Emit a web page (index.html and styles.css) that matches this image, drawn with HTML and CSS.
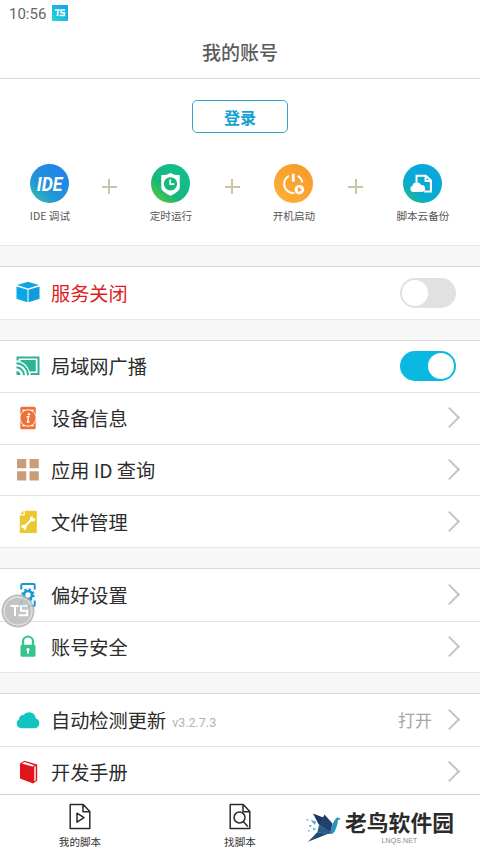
FILE: index.html
```html
<!DOCTYPE html>
<html lang="zh-CN">
<head>
<meta charset="utf-8">
<title>我的账号</title>
<link rel="stylesheet" href="styles.css">
</head>
<body>
<div class="screen">
  <div class="status">
    <span class="time">10:56</span>
    <svg class="app-badge" viewBox="0 0 16 16"><defs><linearGradient id="ts" x1="0" y1="1" x2="1" y2="0"><stop offset="0" stop-color="#2bdcc9"/><stop offset=".5" stop-color="#16b9e6"/><stop offset="1" stop-color="#1ba2ea"/></linearGradient></defs><rect width="16" height="16" fill="url(#ts)"/><path d="M3 5h5M6 5l-.5 6M13.200 5H9.300L9 7.800h3.500L12.200 10.500H7.500" fill="none" stroke="#fff" stroke-width="1.600"/></svg>
  </div>
  <header class="title">我的账号</header>

  <section class="hero">
    <button class="login">登录</button>
    <div class="features">
      <div class="feature">
        <svg viewBox="0 0 38 38"><defs><linearGradient id="g1" x1="0" y1="1" x2=".7" y2=".2"><stop offset="0" stop-color="#35c9a0"/><stop offset=".5" stop-color="#2294d8"/><stop offset="1" stop-color="#2186e6"/></linearGradient></defs><circle cx="19" cy="19" r="19" fill="url(#g1)"/><text class="ide" x="19" y="26.300" text-anchor="middle" textLength="25" lengthAdjust="spacingAndGlyphs">IDE</text></svg>
        <span>IDE 调试</span>
      </div>
      <i class="plus"></i>
      <div class="feature">
        <svg viewBox="0 0 38 38"><defs><linearGradient id="g2" x1="0" y1="1" x2=".7" y2=".2"><stop offset="0" stop-color="#6ccb2c"/><stop offset=".5" stop-color="#16b77c"/><stop offset="1" stop-color="#12bd8c"/></linearGradient></defs><circle cx="19" cy="19" r="19" fill="url(#g2)"/><path d="M19 8.700q4 2.400 9 2.100v12.500q0 3.200-9 7.700-9-4.500-9-7.700V10.800q5 .3 9-2.100z" fill="#fff"/><circle cx="19" cy="19.300" r="6.500" fill="#14b97c"/><path d="M18.700 15v4.700h4" fill="none" stroke="#fff" stroke-width="1.700"/></svg>
        <span>定时运行</span>
      </div>
      <i class="plus"></i>
      <div class="feature">
        <svg viewBox="0 0 38 38"><defs><linearGradient id="g3" x1="0" y1="1" x2=".8" y2="0"><stop offset="0" stop-color="#ffb13b"/><stop offset="1" stop-color="#f79a28"/></linearGradient></defs><circle cx="19" cy="19" r="19" fill="url(#g3)"/><path d="M14.500 11.500a9 9 0 0 0 5.500 16.800M23.200 11.500a9 9 0 0 1 4.300 6.500" fill="none" stroke="#fff" stroke-width="1.900"/><path d="M18.800 9.500v7.800" stroke="#fff" stroke-width="2.800"/><circle cx="24.700" cy="25" r="4.600" fill="#fff"/><path d="M23.200 22.500v5l4-2.500z" fill="#f9a02c"/></svg>
        <span>开机启动</span>
      </div>
      <i class="plus"></i>
      <div class="feature">
        <svg viewBox="0 0 38 38"><defs><linearGradient id="g4" x1="0" y1="1" x2=".7" y2=".2"><stop offset="0" stop-color="#2cbf69"/><stop offset=".45" stop-color="#08abd0"/><stop offset="1" stop-color="#08a8dc"/></linearGradient></defs><circle cx="19" cy="19" r="19" fill="url(#g4)"/><path d="M13.200 17.500v-6h9l5 4.500v10.700h-6.500M22 12v4.500h5" fill="none" stroke="#fff" stroke-width="2"/><path d="M9.500 27.300a3.200 3.200 0 0 1-.3-6.100 4.500 4.500 0 0 1 8.500-.8 3.300 3.300 0 0 1 .8 6.900z" fill="#fff"/></svg>
        <span>脚本云备份</span>
      </div>
    </div>
  </section>

  <section class="group">
    <div class="row">
      <svg class="icon" viewBox="0 0 24 24"><path d="M12 .8 23 4 12 7.500 1 4z" fill="#14a4e4"/><path d="M.5 5.500 11.500 8.700v12.500L.5 17.700z" fill="#0ba6e8"/><path d="M23.500 5.500 12.500 8.700v12.500l11-3.500z" fill="#119bdc"/></svg>
      <span class="label red">服务关闭</span><span class="switch"></span>
    </div>
  </section>

  <section class="group">
    <div class="row">
      <svg class="icon" viewBox="0 0 24 24"><path d="M1.500 6.500V3.400h21v16.700h-8" fill="none" stroke="#2bb596" stroke-width="2"/><path d="M4.500 7.500V6h15.300v11.500h-6.300Q11.500 10 4.500 7.500z" fill="#2bb596"/><path d="M.5 9.200a12 12 0 0 1 11.500 12M.5 13.300a8 8 0 0 1 7.500 7.900" fill="none" stroke="#2bb596" stroke-width="1.900"/><path d="M.5 17a4 4 0 0 1 4 4.100h-4z" fill="#2bb596"/></svg>
      <span class="label">局域网广播</span><span class="switch on"></span>
    </div>
    <div class="row">
      <svg class="icon" viewBox="0 0 24 24"><rect x="4.300" y=".8" width="15.400" height="22.400" rx="1.500" fill="#ee7138"/><path d="M6.300 4.300h11.400M6.300 19.700h11.400" stroke="#fff" stroke-width="1.200"/><circle cx="12" cy="12" r="8.400" fill="#fff"/><circle cx="12" cy="12" r="7.700" fill="#ee7138"/><path d="M10.500 10.800h2.200l-1.200 5.200h2" fill="none" stroke="#fff" stroke-width="1.400"/><circle cx="12.900" cy="8.300" r="1.200" fill="#fff"/></svg>
      <span class="label">设备信息</span><i class="chev"></i>
    </div>
    <div class="row">
      <svg class="icon" viewBox="0 0 24 24"><path d="M1 1h9.300v9.200H1zM13.500 1h9.300v9.200h-9.300zM1 13.300h9.300v9.200H1zM13.500 13.300h9.300v9.200h-9.300z" fill="#c79e78"/></svg>
      <span class="label">应用 ID 查询</span><i class="chev"></i>
    </div>
    <div class="row">
      <svg class="icon" viewBox="0 0 24 24"><path d="M8.800.8h12V23h-17V5.600h5z" fill="#eac92f"/><path d="M7.500.8v3.400H4z" fill="#eac92f"/><path d="m8.500 16.800 7.200-7.500" stroke="#fff" stroke-width="2"/><path d="M16.800 6.200v2.300h2.400a2.600 2.600 0 1 1-2.400-2.300zM7.700 20v-2.300H5.300a2.600 2.600 0 1 1 2.400 2.300z" fill="#fff"/></svg>
      <span class="label">文件管理</span><i class="chev"></i>
    </div>
  </section>

  <section class="group">
    <div class="row">
      <svg class="icon" viewBox="0 0 24 24"><path d="M5.300 6.500V2q0-1 1-1h11.400q1 0 1 1v4.500M5.300 17.500v4.500q0 1 1 1h11.400q1 0 1-1v-4.500" fill="none" stroke="#1597d8" stroke-width="2"/><circle cx="12" cy="12" r="4" fill="none" stroke="#1597d8" stroke-width="2.600"/><circle cx="12" cy="12" r="5.700" fill="none" stroke="#1597d8" stroke-width="2" stroke-dasharray="2.238 2.238"/></svg>
      <span class="label">偏好设置</span><i class="chev"></i>
      <svg class="floating" viewBox="0 0 34 34"><circle cx="17" cy="17" r="16.500" fill="#b5b5b5"/><circle cx="17" cy="17" r="14" fill="#bdbdbd" stroke="#dedede" stroke-width="1.300"/><path d="M9.500 12h8.500M14 12v10M27 12h-7v4.700h6.200v4.500h-8.700" fill="none" stroke="#fff" stroke-width="2"/></svg>
    </div>
    <div class="row">
      <svg class="icon" viewBox="0 0 24 24"><path d="M7 11V6.500a5 5 0 0 1 10 0V11" fill="none" stroke="#34c58c" stroke-width="2.200"/><rect x="4.500" y="9.800" width="15" height="12" rx="1.200" fill="#34c58c"/><path d="M12 13a1.700 1.700 0 0 1 1 3v2.500h-2V16a1.700 1.700 0 0 1 1-3z" fill="#fff"/></svg>
      <span class="label">账号安全</span><i class="chev"></i>
    </div>
  </section>

  <section class="group last">
    <div class="row">
      <svg class="icon" viewBox="0 0 24 24"><path d="M5 20.200a4.700 4.700 0 0 1-2-8.700 4.200 4.200 0 0 1 4.500-4.400 6.800 6.800 0 0 1 12.300 3.400 5 5 0 0 1-.8 9.700z" fill="#11c4bf"/></svg>
      <span class="label">自动检测更新</span><span class="version">v3.2.7.3</span><span class="value">打开</span><i class="chev"></i>
    </div>
    <div class="row">
      <svg class="icon" viewBox="0 0 24 24"><path d="M4 3.500 8.500.8l12.700 3.800v16l-4 3L4 18.500z" fill="#e1141b"/><path d="m5.800 3.400 2.800-1.300 10.200 3.300-2.400 1.200z" fill="#fff"/><path d="M19.700 6v14.500l-1.400.8V6.800z" fill="#fff"/></svg>
      <span class="label">开发手册</span><i class="chev"></i>
    </div>
  </section>

  <nav class="tabs">
    <div class="tab">
      <svg viewBox="0 0 22 26"><path d="M1.200 1h13L20.800 8v17H1.200zM14 1v7.200h6.800M8 9.700v9l7-4.500z"/></svg>
      <span>我的脚本</span>
    </div>
    <div class="tab">
      <svg viewBox="0 0 22 26"><path d="M1.200 1h13L20.800 8v17H1.200zM14 1v7.200h6.800"/><circle cx="10.500" cy="14" r="5.500"/><path d="m14.300 18 4.500 5"/></svg>
      <span>找脚本</span>
    </div>
    <div class="brand">
      <svg viewBox="0 0 36 30"><path d="M8 .5 19.500 5 14 12z" fill="#1d3a63"/><path d="M19.500 1.500 27.500 10.500 25.500 19.500 14 12z" fill="#20406d"/><path d="M14 12 28 20.500 21 21.300 12.500 19z" fill="#2c5b8b"/><path d="M25.500 19.500q1-8 5-13.500 2.800-3 5 .5l-2.500.5Q32 16 28 20.500z" fill="#2594bd"/><path d="M12.500 19 22 21.200 3 28.800q5-5 9.500-9.800z" fill="#1b4c78"/><path d="m5.500 7 5.500 1.500-1 3.500zM1 6l2.500.7-.8 1.600zM4 12l3 .5-2 2zM8 14.500l3 1.500-2.500 1.500zM3 17l2 .5-1.500 1.500z" fill="#45adc8"/></svg>
      <div class="brand-text"><b>老鸟软件园</b><small>LNQS.NET</small></div>
    </div>
  </nav>
</div>
</body>
</html>
```

FILE: styles.css
```css
* { box-sizing: border-box; }
body { margin: 0; background: #fff; font-family: Roboto, "Noto Sans CJK SC", sans-serif; color: #333; }
svg { display: block; flex: none; }
.screen { width: 480px; height: 853px; display: flex; flex-direction: column; overflow: hidden; background: #f7f7f7; }
.status { height: 27px; flex: none; background: #fff; display: flex; align-items: center; padding-left: 9px; gap: 6px; }
.time { font-size: 15px; line-height: 20px; color: #666; width: 37px; }
.app-badge { width: 16px; height: 16px; margin-top: -1px; }
.title { height: 52px; flex: none; background: #fff; border-bottom: 1px solid #d9d9d9; text-align: center; font: 500 19px/49px "Noto Sans CJK SC", sans-serif; color: #5b5b5b; }
.hero { height: 167px; flex: none; background: #fff; border-bottom: 1px solid #e6e6e6; padding-top: 21px; }
.login { display: block; width: 96px; height: 33px; margin: 0 auto; padding: 0; border: 1px solid #36a3cb; border-radius: 5px; background: #fff; color: #159fd3; font: bold 16px/30px "Noto Sans CJK SC", sans-serif; }
.features { display: grid; grid-template-columns: 60px 59px 64px 59px 64px 60px 74px; padding: 31px 0 0 19.900px; }
.feature { display: flex; flex-direction: column; align-items: center; gap: 5px; font: 10.600px/16px "Noto Sans CJK SC", sans-serif; color: #555; white-space: nowrap; }
.feature svg { width: 39px; height: 39px; }
.ide { font: italic bold 19.500px Roboto, sans-serif; fill: #fff; }
.plus { width: 15px; height: 15px; margin: 15px auto 0; background: linear-gradient(#c9c5a5, #c9c5a5) center / 15px 2px no-repeat, linear-gradient(#c9c5a5, #c9c5a5) center / 2px 15px no-repeat; }
.group { flex: none; margin-top: 20px; border-top: 1px solid #d9d9d9; border-bottom: 1px solid #e6e6e6; background: #fff; }
.row { position: relative; height: 51.600px; display: flex; align-items: center; padding: 0 24px 0 15.500px; }
.group .row + .row { border-top: 1px solid #e2e2e2; }
.icon { width: 24px; height: 24px; margin-right: 11.500px; }
.label { font: 19.200px/28px "Noto Sans CJK SC", sans-serif; color: #2c2c2c; white-space: nowrap; }
.red { color: #e01b22; }
.switch { width: 56px; height: 30px; margin-left: auto; border-radius: 15px; background: #e1e1e1; display: flex; padding: 2px; }
.switch::before { content: ""; width: 26px; height: 26px; border-radius: 50%; background: #fff; }
.switch.on { background: #09b9e2; justify-content: flex-end; }
.chev { width: 15px; height: 15px; margin: -1px -1px 0 auto; border: solid #c4c4c4; border-width: 2px 2px 0 0; transform: rotate(45deg); }
.version { font-size: 12.500px; color: #b2b2b2; margin: 5px 0 0 6px; }
.value { font: 17px/26px "Noto Sans CJK SC", sans-serif; color: #a6a6a6; margin-left: auto; }
.value + .chev { margin-left: 10px; }
.floating { position: absolute; left: 1px; top: 25px; width: 34px; height: 34px; opacity: .88; z-index: 1; }
.last { border-bottom: 0; }
.last .row:last-child { height: 48.500px; padding-top: 2px; }
.tabs { flex: 1; min-height: 0; display: grid; grid-template-columns: repeat(3, 160px); background: #fff; border-top: 1px solid #d0d0d0; }
.tab { display: flex; flex-direction: column; align-items: center; padding-top: 8px; font: 10.600px/16px "Noto Sans CJK SC", sans-serif; color: #333; gap: 4px; }
.tab svg { width: 22px; height: 27px; fill: none; stroke: #2b2b2b; stroke-width: 1.500; stroke-linejoin: round; }
.brand { display: flex; align-items: flex-start; padding-top: 15px; margin-left: -15px; gap: 4px; }
.brand svg { width: 36px; height: 30px; margin-top: 3px; }
.brand-text { display: flex; flex-direction: column; align-items: center; color: #2b2b2b; white-space: nowrap; }
.brand-text b { font: bold 21.800px/23px "Noto Sans CJK SC", sans-serif; }
.brand-text small { font: 7px/8px "Liberation Sans", sans-serif; color: #888; letter-spacing: .1px; margin-top: 4px; }
```
